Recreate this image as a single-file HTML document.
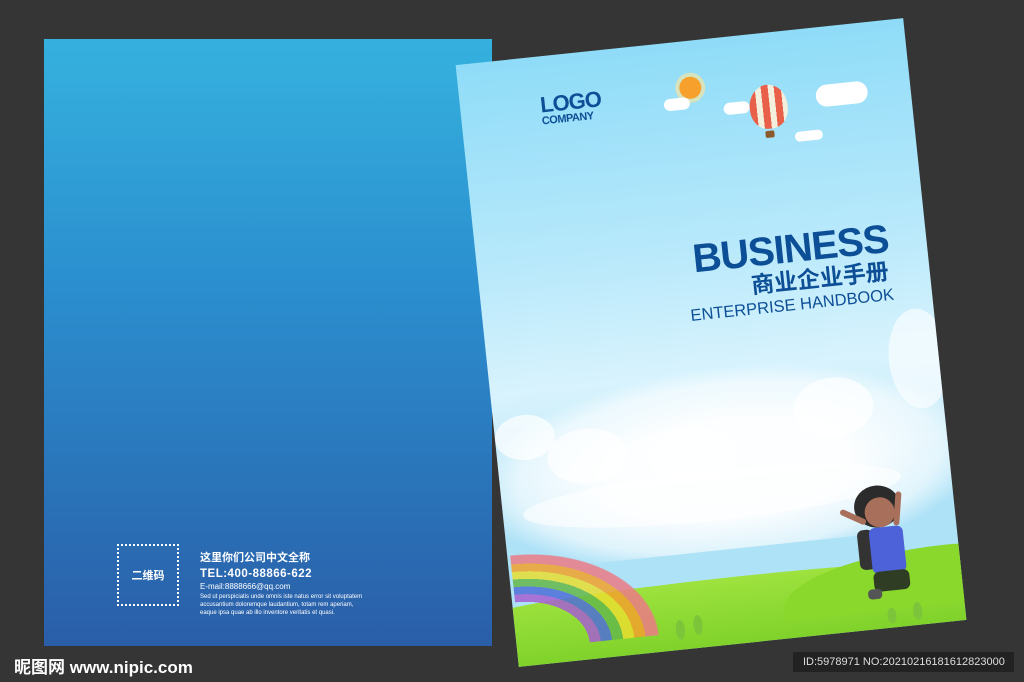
<!DOCTYPE html>
<html><head><meta charset="utf-8"><style>
*{margin:0;padding:0;box-sizing:border-box}
html,body{width:1024px;height:682px;overflow:hidden}
body{background:#353535;position:relative;font-family:"Liberation Sans","Noto Sans CJK SC",sans-serif}
.left{position:absolute;left:44px;top:39px;width:448px;height:607px;background:linear-gradient(#35b1de,#2b8fcf 40%,#2a5ea8)}
.qr{position:absolute;left:73px;top:505px;width:62px;height:62px;border:2px dotted #fff;color:#fff;font-size:11px;font-weight:bold;display:flex;align-items:center;justify-content:center}
.info{position:absolute;left:156px;top:510px;color:#fff}
.page{position:absolute;left:486px;top:40px;width:450px;height:605px;transform:rotate(-6deg);overflow:hidden;background:linear-gradient(#8fdcf8,#b9e9fb 35%,#d8f3fd 55%,#aee2f7 80%)}
.abs{position:absolute}
.cl{position:absolute;background:#fff;border-radius:50%}
</style></head><body>
<div class="left">
 <div class="qr">二维码</div>
 <div class="info">
  <div style="font-size:11px;font-weight:bold">这里你们公司中文全称</div>
  <div style="font-size:11.5px;font-weight:bold;letter-spacing:.5px;margin-top:3px">TEL:400-88866-622</div>
  <div style="font-size:8px;margin-top:2px">E-mail:8888666@qq.com</div>
  <div style="font-size:6px;line-height:8px;margin-top:2px">Sed ut perspiciatis unde omnis iste natus error sit voluptatem<br>accusantium doloremque laudantium, totam rem aperiam,<br>eaque ipsa quae ab illo inventore veritatis et quasi.</div>
 </div>
</div>
<div class="page">
 <div class="abs" style="left:-20px;top:330px;width:500px;height:180px;background:radial-gradient(ellipse at 50% 55%,rgba(255,255,255,.95) 35%,rgba(255,255,255,.6) 60%,rgba(255,255,255,0) 72%)"></div>
 <div class="cl" style="left:0;top:355px;width:60px;height:45px;opacity:.7"></div>
 <div class="cl" style="left:50px;top:375px;width:80px;height:55px;opacity:.7"></div>
 <div class="cl" style="left:150px;top:385px;width:90px;height:55px;opacity:.7"></div>
 <div class="cl" style="left:300px;top:350px;width:80px;height:60px;opacity:.7"></div>
 <div class="cl" style="left:400px;top:290px;width:60px;height:100px;opacity:.6"></div>
 <div class="cl" style="left:20px;top:430px;width:380px;height:50px;opacity:.6"></div>
 <div class="abs" style="left:-30px;top:538px;width:520px;height:120px;background:linear-gradient(#9ee23e,#68c61c);border-radius:50% 50% 0 0/12% 12% 0 0"></div>
 <div class="abs" style="left:270px;top:528px;width:240px;height:60px;background:#8ad82c;border-radius:70% 30% 0 0/80% 40% 0 0"></div>
 <div class="abs" style="left:-137px;top:493px;width:280px;height:190px;background:radial-gradient(closest-side,transparent 50%,#a65fd0 50%,#a65fd0 58%,#4e6ed8 58%,#4e6ed8 66%,#64b84a 66%,#64b84a 74%,#e8de30 74%,#e8de30 82%,#f2a12c 82%,#f2a12c 90%,#ec7a86 90%,#ec7a86 99%,transparent 100%);clip-path:inset(0 0 50% 50%);opacity:.85"></div>
 <div class="abs" style="left:80px;top:38px;font-family:'Liberation Sans';font-weight:bold;color:#0d4f96;line-height:1"><div style="font-size:22px;letter-spacing:-1px">LOGO</div><div style="font-size:11px;letter-spacing:-.5px">COMPANY</div></div>
 <div class="abs" style="left:220px;top:36px;width:22px;height:22px;border-radius:50%;background:#f7a02c;box-shadow:0 0 0 4px rgba(255,230,150,.6)"></div>
 <div class="cl" style="left:203px;top:56px;width:26px;height:12px;border-radius:8px"></div>
 <div class="abs" style="left:288px;top:52px;width:38px;height:44px;border-radius:50% 50% 45% 45%;background:repeating-linear-gradient(90deg,#e8604a 0 7px,#f4eedd 7px 13px)"></div>
 <div class="abs" style="left:301px;top:98px;width:9px;height:7px;background:#8b5a2b;border-radius:2px"></div>
 <div class="cl" style="left:262px;top:66px;width:26px;height:12px;border-radius:8px"></div>
 <div class="cl" style="left:355px;top:58px;width:52px;height:22px;border-radius:12px"></div>
 <div class="cl" style="left:330px;top:102px;width:28px;height:10px;border-radius:6px"></div>
 <div class="abs" style="right:38px;top:198px;text-align:right;color:#0d4f96;line-height:1">
  <div style="font-size:40px;font-weight:bold;letter-spacing:-1px">BUSINESS</div>
  <div style="font-size:23px;font-weight:bold;margin-top:1px;padding-right:3px">商业企业手册</div>
  <div style="font-size:16.5px;margin-top:4px">ENTERPRISE HANDBOOK</div>
 </div>
 <div class="abs" style="left:350px;top:462px;width:46px;height:42px;border-radius:50%;background:#2b2b2b"></div>
 <div class="abs" style="left:360px;top:474px;width:30px;height:30px;border-radius:50%;background:#a8705a"></div>
 <div class="abs" style="left:334px;top:488px;width:28px;height:6px;background:#a8705a;border-radius:3px;transform:rotate(30deg)"></div>
 <div class="abs" style="left:390px;top:470px;width:6px;height:34px;background:#a8705a;border-radius:3px;transform:rotate(10deg)"></div>
 <div class="abs" style="left:350px;top:505px;width:16px;height:40px;background:#333;border-radius:6px"></div>
 <div class="abs" style="left:362px;top:504px;width:34px;height:46px;background:#4d62d8;border-radius:6px"></div>
 <div class="abs" style="left:362px;top:548px;width:36px;height:20px;background:#2e3d24;border-radius:6px"></div>
 <div class="abs" style="left:355px;top:565px;width:14px;height:10px;background:#555;border-radius:4px"></div>
 <div class="abs" style="left:160px;top:575px;width:9px;height:20px;border-radius:50%;background:#7cc53a"></div>
 <div class="abs" style="left:178px;top:572px;width:9px;height:20px;border-radius:50%;background:#7cc53a"></div>
 <div class="abs" style="left:372px;top:585px;width:9px;height:16px;border-radius:50%;background:#7cc53a"></div>
 <div class="abs" style="left:398px;top:582px;width:9px;height:18px;border-radius:50%;background:#7cc53a"></div>
</div>
<div class="abs" style="left:14px;top:653px;color:#fff;font-size:17px;font-weight:bold">昵图网 <span style="font-size:17px">www.nipic.com</span></div>
<div class="abs" style="left:793px;top:652px;width:221px;height:20px;background:#222;color:#ddd;font-size:11px;line-height:20px;padding-left:10px">ID:5978971 NO:20210216181612823000</div>
</body></html>
